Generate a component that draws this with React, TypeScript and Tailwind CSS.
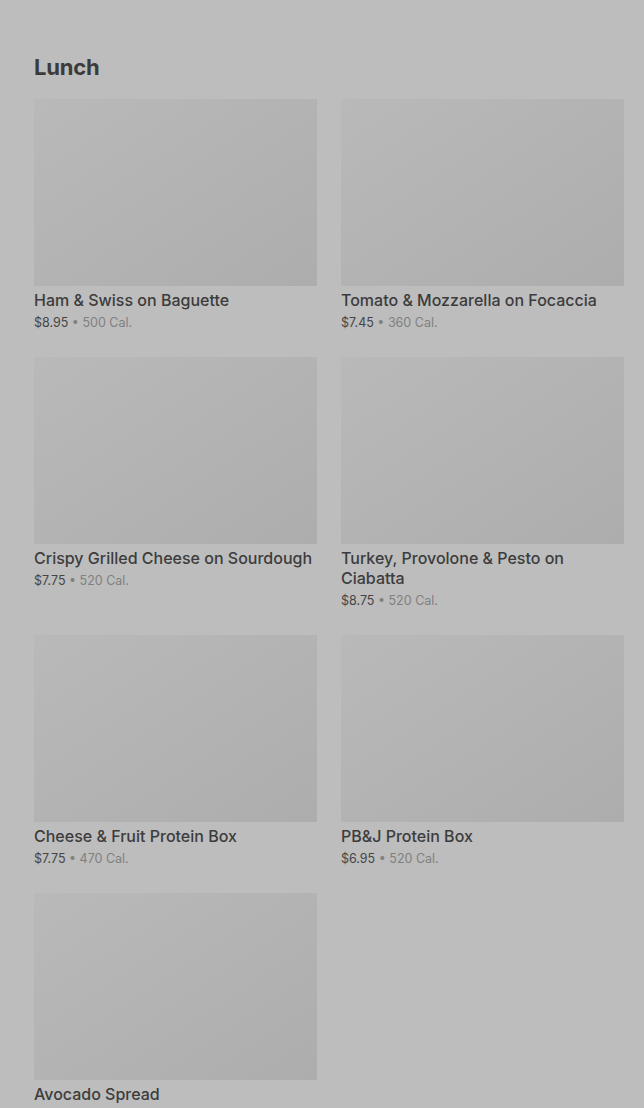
import React from "react";

type Item = { name: string; price: string; cal?: string };

const items: Item[] = [
  { name: "Ham & Swiss on Baguette", price: "$8.95", cal: "500 Cal." },
  { name: "Tomato & Mozzarella on Focaccia", price: "$7.45", cal: "360 Cal." },
  { name: "Crispy Grilled Cheese on Sourdough", price: "$7.75", cal: "520 Cal." },
  { name: "Turkey, Provolone & Pesto on Ciabatta", price: "$8.75", cal: "520 Cal." },
  { name: "Cheese & Fruit Protein Box", price: "$7.75", cal: "470 Cal." },
  { name: "PB&J Protein Box", price: "$6.95", cal: "520 Cal." },
  { name: "Avocado Spread", price: "$1.50", cal: "90 Cal." },
];

export default function App() {
  return (
    <div
      className="min-h-[1108px] bg-[#bdbdbd] pl-[34px] pr-[20px] pt-[52px]"
      style={{ fontFamily: "Inter, 'Noto Sans', sans-serif" }}
    >
      <h2 className="text-[22px] leading-[30px] font-bold text-[#3b3b3b] tracking-[-0.2px]">Lunch</h2>
      <div className="mt-[17px] grid grid-cols-2 gap-x-[24px] gap-y-[26px]">
        {items.map((it) => (
          <div key={it.name} className="flex flex-col">
            <div className="h-[187px] bg-gradient-to-br from-[#b9b9b9] to-[#adadad]" />
            <div className="mt-[4px] text-[16px] leading-[20px] font-medium text-[#3c3c3c]">{it.name}</div>
            <div className="mt-[5px] text-[12.5px] leading-[16px] text-[#454545]">
              {it.price}
              <span className="text-[#808080]"> • {it.cal}</span>
            </div>
          </div>
        ))}
      </div>
    </div>
  );
}
